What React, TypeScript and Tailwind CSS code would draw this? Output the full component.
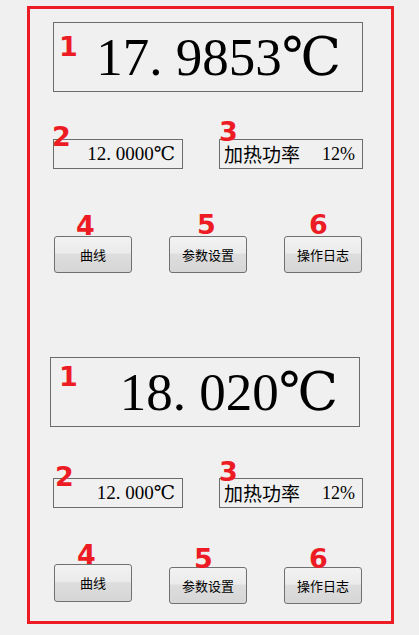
import React from 'react'

const serif = { fontFamily: '"Liberation Serif", "DejaVu Serif", "Noto Sans CJK SC", serif' }
const cjk = { fontFamily: '"Noto Sans CJK SC", "DejaVu Sans", sans-serif' }

function Tag({ n, className }: { n: string; className: string }) {
  return (
    <span
      className={'absolute text-[27px] font-bold leading-none text-[#ed1c24] ' + className}
      style={{ fontFamily: '"DejaVu Sans", sans-serif' }}
    >
      {n}
    </span>
  )
}

function Btn({ label, tag, tagPos, className }: { label: string; tag: string; tagPos: string; className?: string }) {
  return (
    <div
      className={
        'relative w-[78px] h-[37px] rounded-[3px] border border-[#707070] flex items-center justify-center text-[13px] text-black bg-[linear-gradient(#f2f2f2_0%,#ebebeb_45%,#dddddd_50%,#d6d6d6_100%)] ' +
        (className ?? '')
      }
      style={cjk}
    >
      <Tag n={tag} className={tagPos} />
      {label}
    </div>
  )
}

function Section({ big, small, second }: { big: string; small: string; second?: boolean }) {
  return (
    <div>
      <div
        className={
          'relative w-[310px] h-[70px] border border-[#6b6b6b] flex items-center justify-end pr-[21px] text-[53px] text-black ' +
          (second ? 'ml-[20px]' : 'ml-[23px] mt-[13px]')
        }
        style={serif}
      >
        <Tag n="1" className={second ? 'left-[8px] top-[5px]' : 'left-[5px] top-[10px]'} />
        <span className="leading-none">{big}</span>
      </div>

      <div className={'flex ' + (second ? 'mt-[51px]' : 'mt-[47px]')}>
        <div
          className="relative ml-[23px] w-[130px] h-[30px] border border-[#6b6b6b] flex items-center justify-end pr-[7px] text-[19px] text-black"
          style={serif}
        >
          <Tag n="2" className={second ? 'left-[1px] top-[-16px]' : 'left-[-2px] top-[-17px]'} />
          {small}
        </div>
        <div
          className="relative ml-[36px] w-[144px] h-[30px] border border-[#6b6b6b] flex items-center justify-between pl-[4px] pr-[7px] text-[18px] text-black"
          style={serif}
        >
          <Tag n="3" className={second ? 'left-[-1px] top-[-21px]' : 'left-[-1px] top-[-22px]'} />
          <span style={cjk} className="text-[19px]">加热功率</span>
          <span>12%</span>
        </div>
      </div>

      {second ? (
        <div className="flex items-start mt-[56px]">
          <Btn label="曲线" tag="4" tagPos="left-[22px] top-[-24px]" className="ml-[24px] h-[38px]" />
          <Btn label="参数设置" tag="5" tagPos="left-[24px] top-[-23px]" className="ml-[37px] mt-[3px]" />
          <Btn label="操作日志" tag="6" tagPos="left-[24px] top-[-23px]" className="ml-[37px] mt-[3px]" />
        </div>
      ) : (
        <div className="flex mt-[67px]">
          <Btn label="曲线" tag="4" tagPos="left-[21px] top-[-25px]" className="ml-[24px]" />
          <Btn label="参数设置" tag="5" tagPos="left-[27px] top-[-26px]" className="ml-[37px]" />
          <Btn label="操作日志" tag="6" tagPos="left-[24px] top-[-26px]" className="ml-[37px]" />
        </div>
      )}
    </div>
  )
}

export default function App() {
  return (
    <div className="w-[419px] h-[635px] bg-[#f0f0f0] overflow-hidden pt-[6px]">
      <div className="ml-[27px] w-[367px] h-[618px] border-[3px] border-[#ed1c24]">
        <Section big="17. 9853℃" small="12. 0000℃" />
        <div className="mt-[84px]">
          <Section big="18. 020℃" small="12. 000℃" second />
        </div>
      </div>
    </div>
  )
}
